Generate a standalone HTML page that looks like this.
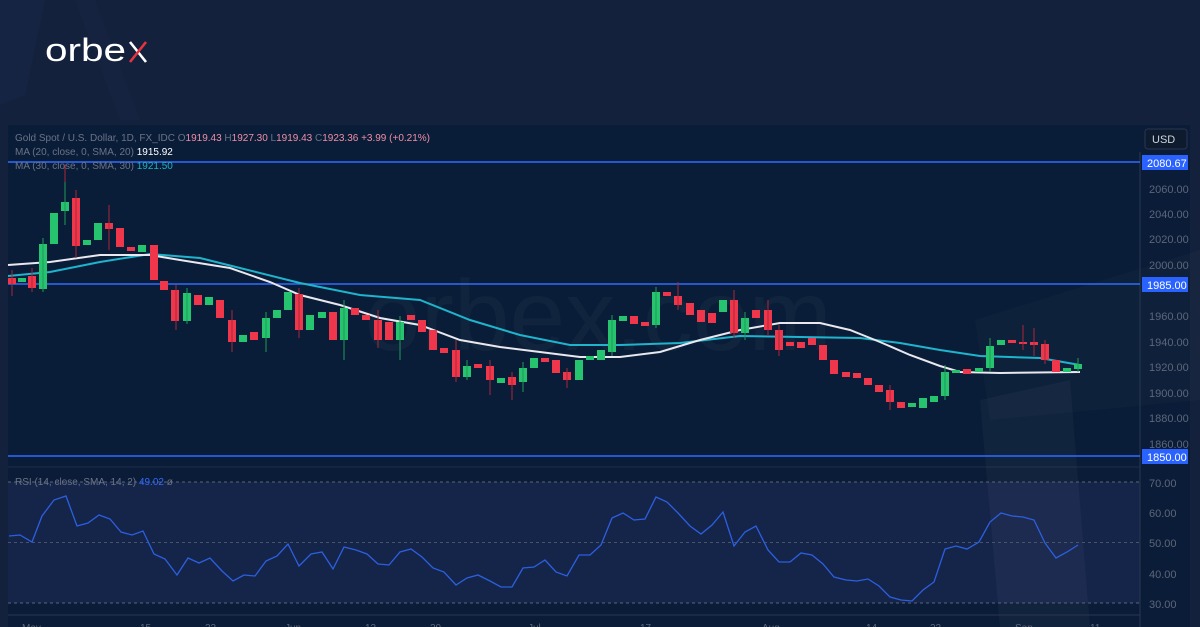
<!DOCTYPE html>
<html><head><meta charset="utf-8"><style>
html,body{margin:0;padding:0;width:1200px;height:627px;overflow:hidden;background:#13213c;font-family:"Liberation Sans",sans-serif}
svg{position:absolute;left:0;top:0}
</style></head><body>
<svg width="1200" height="627" viewBox="0 0 1200 627" xmlns="http://www.w3.org/2000/svg" font-family="Liberation Sans, sans-serif">
<rect width="1200" height="627" fill="#13213c"/>
<path d="M0 0 L45 0 L25 95 L0 105Z" fill="#172644" opacity="0.7"/>
<path d="M75 0 L95 0 L140 120 L120 120Z" fill="#172644" opacity="0.5"/>
<!-- chart panel -->
<rect x="8" y="125" width="1182" height="502" fill="#0b1c38"/>
<rect x="8" y="125" width="1132" height="342" fill="#0a1d38"/>
<!-- watermark -->
<text x="365" y="350" font-size="100" fill="#ffffff" fill-opacity="0.03" font-weight="400">orbex.com</text>
<!-- rsi panel -->
<line x1="8" y1="467" x2="1140" y2="467" stroke="#1f2d47"/>
<rect x="8" y="482" width="1132" height="121" fill="#15254a"/>
<path d="M975 320 L1200 250 L1200 400 L990 420Z" fill="#ffffff" fill-opacity="0.02"/>
<path d="M980 400 L1070 380 L1090 627 L1000 627Z" fill="#ffffff" fill-opacity="0.03"/>
<line x1="8" y1="482" x2="1140" y2="482" stroke="#5a6478" stroke-dasharray="3,3"/>
<line x1="8" y1="542.5" x2="1140" y2="542.5" stroke="#4a5468" stroke-dasharray="3,3"/>
<line x1="8" y1="603" x2="1140" y2="603" stroke="#5a6478" stroke-dasharray="3,3"/>
<line x1="8" y1="615" x2="1140" y2="615" stroke="#2a3650"/>
<line x1="1140" y1="152" x2="1140" y2="627" stroke="#2a3650"/>
<!-- horizontal levels -->
<line x1="8" y1="162" x2="1140" y2="162" stroke="#2f6bff" stroke-width="1.5"/>
<line x1="8" y1="284" x2="1140" y2="284" stroke="#2f6bff" stroke-width="1.5"/>
<line x1="8" y1="456" x2="1140" y2="456" stroke="#2f6bff" stroke-width="1.5"/>
<!-- axis labels -->
<g font-size="11" fill="#5d6678">
<text x="1149" y="193">2060.00</text><text x="1149" y="218">2040.00</text><text x="1149" y="243">2020.00</text><text x="1149" y="269">2000.00</text>
<text x="1149" y="320">1960.00</text><text x="1149" y="346">1940.00</text><text x="1149" y="371">1920.00</text><text x="1149" y="397">1900.00</text><text x="1149" y="422">1880.00</text><text x="1149" y="448">1860.00</text>
<text x="1149" y="487">70.00</text><text x="1149" y="517">60.00</text><text x="1149" y="547">50.00</text><text x="1149" y="578">40.00</text><text x="1149" y="608">30.00</text>
</g>
<g font-size="11" fill="#fff">
<rect x="1142" y="155" width="46" height="15" fill="#2962ff"/><text x="1147" y="167">2080.67</text>
<rect x="1142" y="277" width="46" height="15" fill="#2962ff"/><text x="1147" y="289">1985.00</text>
<rect x="1142" y="449" width="46" height="15" fill="#2962ff"/><text x="1147" y="461">1850.00</text>
</g>
<rect x="1145" y="129" width="42" height="20" rx="3" fill="#0e1a2e" stroke="#2a3650"/>
<text x="1152" y="143" font-size="11" fill="#d0d4dc">USD</text>
<g font-size="10" fill="#5d6678">
<text x="22" y="631">May</text><text x="140" y="631">15</text><text x="205" y="631">22</text><text x="285" y="631">Jun</text><text x="365" y="631">12</text><text x="430" y="631">20</text><text x="528" y="631">Jul</text><text x="640" y="631">17</text><text x="762" y="631">Aug</text><text x="866" y="631">14</text><text x="930" y="631">22</text><text x="1015" y="631">Sep</text><text x="1090" y="631">11</text>
</g>
<!-- legend -->
<g font-size="10">
<text x="15" y="141" fill="#6a7386" textLength="415">Gold Spot / U.S. Dollar, 1D, FX_IDC <tspan>O</tspan><tspan fill="#f08fa5">1919.43</tspan> H<tspan fill="#f08fa5">1927.30</tspan> L<tspan fill="#f08fa5">1919.43</tspan> C<tspan fill="#f08fa5">1923.36</tspan> <tspan fill="#f08fa5">+3.99 (+0.21%)</tspan></text>
<text x="15" y="155" fill="#6a7386">MA (20, close, 0, SMA, 20) <tspan fill="#ffffff"> 1915.92</tspan></text>
<text x="15" y="169" fill="#6a7386">MA (30, close, 0, SMA, 30) <tspan fill="#1fb0c8"> 1921.50</tspan></text>
<text x="15" y="485" fill="#6a7386" font-size="10">RSI (14, close, SMA, 14, 2) <tspan fill="#2f6bff">49.02</tspan> ø</text>
</g>
<!-- MAs -->
<polyline fill="none" stroke="#1fb4cc" stroke-width="2" points="8,276 50,272 100,262 150,254 200,258 240,268 300,283 360,295 420,300 470,320 520,335 570,345 620,345 680,343 740,336 800,337 860,338 900,343 940,350 980,356 1040,358 1080,365"/>
<polyline fill="none" stroke="#e8e8ee" stroke-width="2" points="8,265 50,262 100,255 150,255 180,260 230,268 270,282 300,295 340,305 380,318 420,325 460,340 500,347 540,352 580,357 620,357 660,352 700,340 740,330 780,323 820,323 850,330 880,342 910,355 940,366 960,372 1000,373 1080,372"/>
<!-- candles -->
<g fill="#f0364a">
<rect x="8" y="278" width="8" height="6"/><rect x="28" y="276" width="8" height="12"/><rect x="72" y="198" width="8" height="48"/><rect x="105" y="223" width="8" height="6"/><rect x="116" y="228" width="8" height="19"/><rect x="127" y="247" width="8" height="4"/><rect x="150" y="245" width="8" height="35"/><rect x="160" y="281" width="8" height="9"/><rect x="171" y="290" width="8" height="31"/><rect x="194" y="295" width="8" height="10"/><rect x="216" y="300" width="8" height="18"/><rect x="228" y="320" width="8" height="22"/><rect x="250" y="332" width="8" height="8"/><rect x="295" y="294" width="8" height="36"/><rect x="329" y="312" width="8" height="28"/><rect x="351" y="308" width="8" height="7"/><rect x="362" y="315" width="8" height="5"/><rect x="374" y="320" width="8" height="20"/><rect x="385" y="322" width="8" height="18"/><rect x="407" y="315" width="8" height="5"/><rect x="418" y="320" width="8" height="12"/><rect x="429" y="330" width="8" height="20"/><rect x="440" y="348" width="8" height="5"/><rect x="452" y="350" width="8" height="27"/><rect x="474" y="364" width="8" height="4"/><rect x="486" y="366" width="8" height="14"/><rect x="508" y="377" width="8" height="8"/><rect x="541" y="358" width="8" height="4"/><rect x="552" y="360" width="8" height="13"/><rect x="563" y="372" width="8" height="8"/><rect x="630" y="316" width="8" height="8"/><rect x="641" y="322" width="8" height="4"/><rect x="663" y="292" width="8" height="4"/><rect x="674" y="296" width="8" height="9"/><rect x="686" y="303" width="8" height="12"/><rect x="697" y="310" width="8" height="12"/><rect x="708" y="313" width="8" height="10"/><rect x="730" y="300" width="8" height="33"/><rect x="752" y="310" width="8" height="8"/><rect x="764" y="310" width="8" height="20"/><rect x="775" y="330" width="8" height="20"/><rect x="786" y="342" width="8" height="4"/><rect x="797" y="342" width="8" height="6"/><rect x="808" y="338" width="8" height="7"/><rect x="819" y="345" width="8" height="15"/><rect x="830" y="360" width="8" height="14"/><rect x="842" y="372" width="8" height="5"/><rect x="853" y="373" width="8" height="5"/><rect x="864" y="378" width="8" height="7"/><rect x="875" y="385" width="8" height="7"/><rect x="886" y="390" width="8" height="12"/><rect x="897" y="402" width="8" height="6"/><rect x="963" y="369" width="8" height="5"/><rect x="1008" y="340" width="8" height="3"/><rect x="1019" y="342" width="8" height="2"/><rect x="1030" y="342" width="8" height="3"/><rect x="1041" y="344" width="8" height="16"/><rect x="1052" y="360" width="8" height="12"/>
</g>
<g fill="#26c46e">
<rect x="18" y="278" width="8" height="4"/><rect x="39" y="244" width="8" height="45"/><rect x="50" y="213" width="8" height="31"/><rect x="61" y="202" width="8" height="9"/><rect x="83" y="240" width="8" height="5"/><rect x="94" y="223" width="8" height="17"/><rect x="138" y="245" width="8" height="7"/><rect x="183" y="293" width="8" height="28"/><rect x="205" y="297" width="8" height="8"/><rect x="239" y="335" width="8" height="7"/><rect x="262" y="318" width="8" height="20"/><rect x="273" y="310" width="8" height="8"/><rect x="284" y="292" width="8" height="18"/><rect x="306" y="315" width="8" height="15"/><rect x="318" y="312" width="8" height="6"/><rect x="340" y="308" width="8" height="32"/><rect x="396" y="322" width="8" height="18"/><rect x="463" y="366" width="8" height="11"/><rect x="497" y="378" width="8" height="5"/><rect x="519" y="368" width="8" height="14"/><rect x="530" y="358" width="8" height="10"/><rect x="575" y="360" width="8" height="20"/><rect x="586" y="356" width="8" height="4"/><rect x="597" y="350" width="8" height="10"/><rect x="608" y="320" width="8" height="32"/><rect x="619" y="316" width="8" height="5"/><rect x="652" y="292" width="8" height="33"/><rect x="719" y="300" width="8" height="12"/><rect x="741" y="318" width="8" height="15"/><rect x="908" y="403" width="8" height="4"/><rect x="919" y="398" width="8" height="10"/><rect x="930" y="396" width="8" height="6"/><rect x="941" y="372" width="8" height="24"/><rect x="952" y="370" width="8" height="3"/><rect x="975" y="368" width="8" height="4"/><rect x="986" y="346" width="8" height="22"/><rect x="997" y="340" width="8" height="5"/><rect x="1063" y="368" width="8" height="4"/><rect x="1074" y="364" width="8" height="5"/>
</g>
<g stroke-width="1">
<path d="M65 165V225M76 190V258M109 205V250M12 270V296M32 268V292M176 285V330M232 310V352M299 288V338M378 310V348M456 340V382M490 360V395M512 372V400M567 368V388M678 282V310M734 290V338M768 300V336M779 325V356M890 385V410M1023 325V350M1034 328V356M1045 340V364" stroke="#a8283a"/>
<path d="M43 238V292M65 182V225M187 288V324M266 312V352M344 300V360M400 316V360M467 360V380M523 362V392M612 315V356M656 287V328M745 312V340M945 365V400M990 338V372M1078 358V372" stroke="#1f9a58"/>
</g>
<!-- RSI -->
<polyline fill="none" stroke="#2c5fe0" stroke-width="1.3" points="9,536 20,535 32,542 42,516 54,500 66,496 77,526 88,523 99,515 110,519 121,532 132,535 143,531 154,554 165,559 177,575 188,558 199,563 210,558 222,571 233,581 244,575 255,576 266,561 277,556 288,544 299,566 311,554 322,552 333,569 344,547 356,550 367,554 378,564 389,565 400,552 411,549 422,557 433,568 444,572 456,585 467,578 478,575 490,581 501,587 512,587 523,568 534,567 545,560 556,572 567,576 579,555 590,555 601,545 612,518 623,513 634,520 645,519 656,497 667,502 678,513 690,526 701,534 712,525 723,512 734,546 745,532 756,526 768,550 779,562 790,562 801,553 812,555 823,564 834,577 846,580 857,581 868,579 879,586 890,597 901,600 912,601 923,590 934,582 945,549 956,546 967,549 979,542 990,522 1001,513 1012,516 1023,517 1034,520 1045,543 1056,558 1067,552 1078,545"/>
<!-- logo -->
<text x="45" y="61" font-size="32" fill="#ffffff" textLength="81" lengthAdjust="spacingAndGlyphs">orbe</text>
<path d="M130 42 L146 62" stroke="#ffffff" stroke-width="2.6"/>
<path d="M146 42 L130 62" stroke="#e5343f" stroke-width="2.6"/>
</svg>
</body></html>
